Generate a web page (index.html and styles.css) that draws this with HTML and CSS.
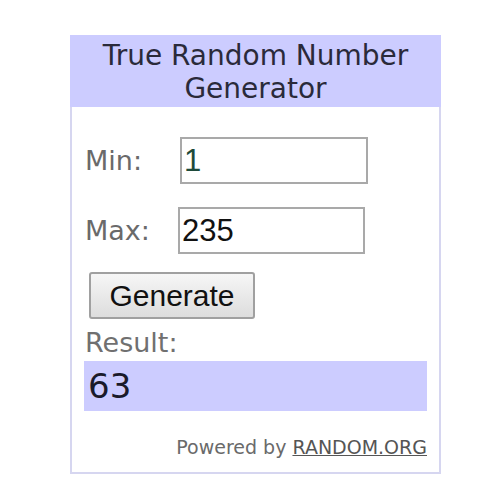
FILE: index.html
```html
<!DOCTYPE html>
<html>
<head>
<meta charset="utf-8">
<link rel="stylesheet" href="styles.css">
</head>
<body>
<div class="widget">
  <div class="header">True Random Number<br>Generator</div>
  <div class="content">
    <div class="row row-min">
      <span class="label">Min:</span>
      <input class="field field-min" type="text" value="1">
    </div>
    <div class="row row-max">
      <span class="label">Max:</span>
      <input class="field field-max" type="text" value="235">
    </div>
    <button class="generate" type="button">Generate</button>
    <div class="result-label">Result:</div>
    <div class="result">63</div>
    <div class="powered">Powered by <a class="link" href="#">RANDOM.ORG</a></div>
  </div>
</div>
</body>
</html>
```
FILE: styles.css
```css
html, body {
  margin: 0;
  padding: 0;
  background: #ffffff;
}
.widget {
  box-sizing: border-box;
  margin: 35px 0 0 70px;
  width: 371px;
  height: 439px;
  border: 2px solid #d6d6f0;
  border-top: none;
  font-family: "DejaVu Sans", Verdana, sans-serif;
}
.header {
  box-sizing: border-box;
  height: 72px;
  background: #ccccff;
  color: #2a2a3a;
  text-align: center;
  font-size: 28px;
  line-height: 33px;
  padding-top: 4px;
  margin: 0 -2px;
}
.content {
  display: flex;
  flex-direction: column;
  align-items: flex-start;
  padding: 0 12px 0 12px;
}
.row {
  display: flex;
  align-items: center;
}
.row-min {
  margin-top: 30px;
}
.row-max {
  margin-top: 23px;
}
.label {
  color: #6a6a6a;
  font-size: 27px;
  width: 93px;
  padding-left: 1px;
}
.field {
  box-sizing: border-box;
  height: 47px;
  border: 2px solid #a9a9a9;
  font-family: "Liberation Sans", Arial, sans-serif;
  font-size: 31px;
  padding: 0 2px;
  color: #111;
  outline: none;
}
.field-min {
  width: 188px;
  margin-left: 2px;
  color: #1e4a3a;
}
.field-max {
  width: 187px;
}
.generate {
  box-sizing: border-box;
  margin-top: 18px;
  margin-left: 5px;
  width: 166px;
  height: 47px;
  border: 2px solid #a0a0a0;
  border-radius: 3px;
  background: linear-gradient(#f6f6f6, #dddddd);
  font-family: "Liberation Sans", Arial, sans-serif;
  font-size: 30px;
  color: #111;
  padding: 0;
}
.result-label {
  color: #707070;
  font-size: 27px;
  line-height: 30px;
  margin-top: 9px;
  padding-left: 1px;
}
.result {
  box-sizing: border-box;
  align-self: stretch;
  height: 50px;
  margin-top: 3px;
  background: #ccccff;
  color: #1a1a2a;
  font-size: 34px;
  line-height: 50px;
  padding-left: 4px;
}
.powered {
  align-self: flex-end;
  margin-top: 25px;
  color: #6a6a6a;
  font-size: 19px;
  line-height: 22px;
}
.link {
  color: #555;
  text-decoration: underline;
}
```
